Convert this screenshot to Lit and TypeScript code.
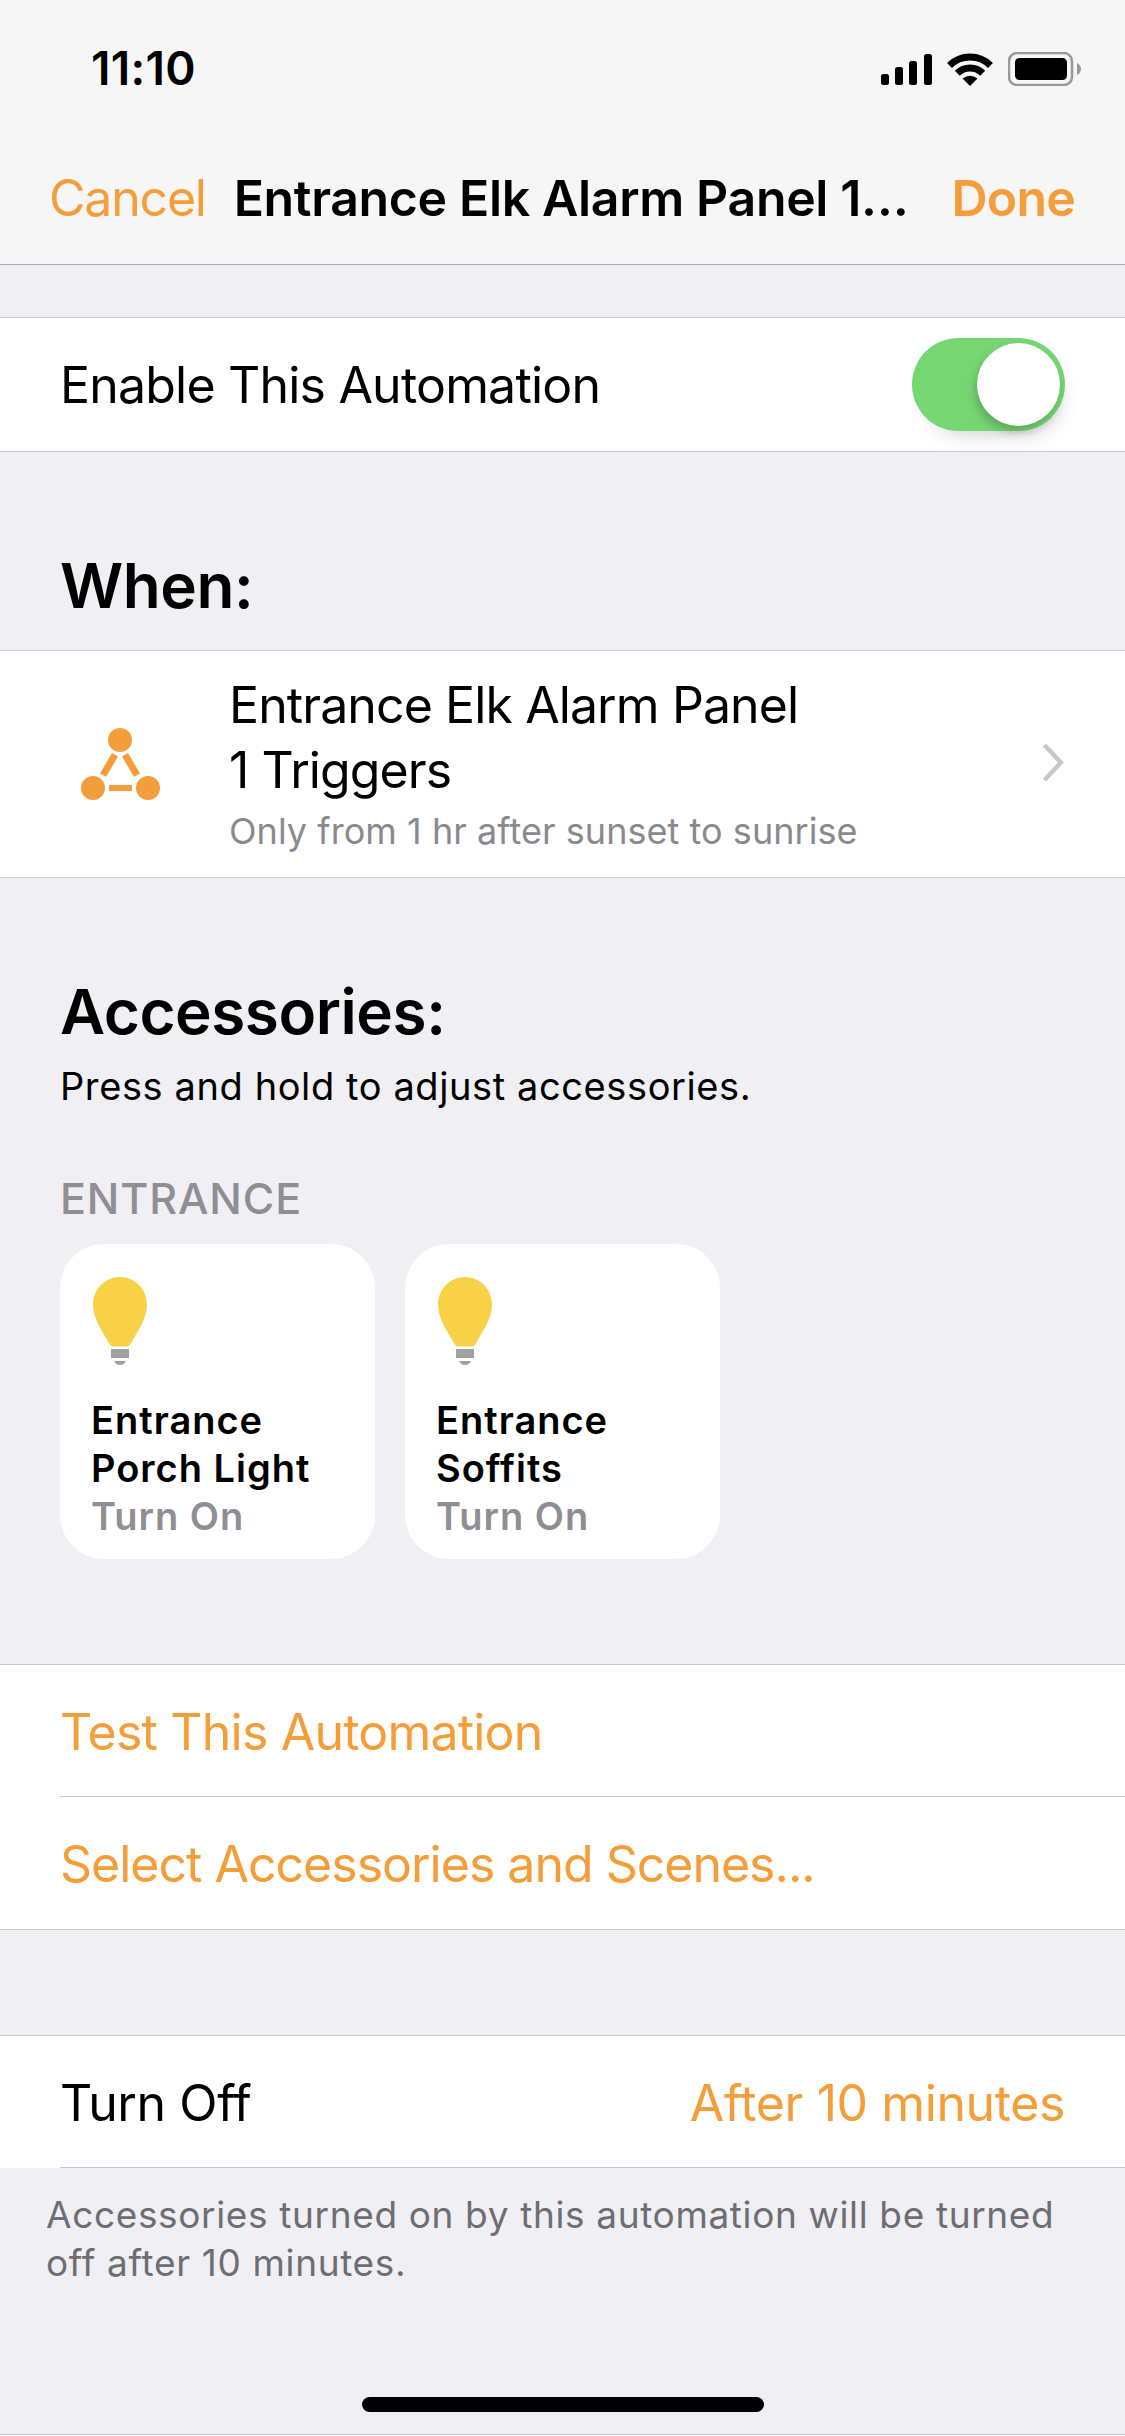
import { LitElement, html, css } from "lit";
import { customElement } from "lit/decorators.js";

@customElement("app-root")
export class AppRoot extends LitElement {
  static styles = css`
    :host { display: block; width: 1125px; height: 2436px; overflow: hidden; background: #efeff4; font-family: Inter, "Liberation Sans", sans-serif; color: #000; }
    * { box-sizing: border-box; }
    .page { position: relative; height: 2436px; display: flex; flex-direction: column; }
    .nav { height: 265px; background: #f6f6f6; border-bottom: 1px solid #a9a9ac; }
    .status { height: 132px; padding: 4px 44px 0 91px; display: flex; align-items: center; justify-content: space-between; }
    .time { font-size: 46px; font-weight: 600; letter-spacing: .3px; line-height: 50px; }
    .sicons { display: flex; align-items: center; gap: 15px; margin-top: 2px; }
    .sicons svg { display: block; }
    .bar { height: 132px; padding: 0 50px 0 49px; display: flex; align-items: center; justify-content: space-between; font-size: 50px; line-height: 60px; white-space: nowrap; }
    .cancel { color: #f59d38; letter-spacing: -1.2px; }
    .title { font-weight: 600; letter-spacing: -.35px; margin-right: 15px; }
    .done { color: #f59d38; font-weight: 600; letter-spacing: -.8px; }
    .group { background: #fff; border-top: 1px solid #c8c7cc; border-bottom: 1px solid #c8c7cc; }
    .row { display: flex; align-items: center; justify-content: space-between; padding: 0 60px; font-size: 50px; line-height: 60px; letter-spacing: -.8px; }
    .enable { margin-top: 52px; height: 135px; }
    .toggle { position: relative; width: 153px; height: 93px; border-radius: 47px; background: #76d672; overflow: visible; box-shadow: 6px 14px 22px -14px rgba(0,0,0,.25); }
    .knob { position: absolute; top: 5px; right: 5px; width: 83px; height: 83px; border-radius: 50%; background: #fff; box-shadow: -2px 6px 10px rgba(0,0,0,.2); }
    .h { padding: 0 60px; font-size: 62px; line-height: 70px; font-weight: 600; letter-spacing: -.45px; margin-top: 99px; }
    .trigger { margin-top: 29px; height: 228px; padding: 0 61px 0 81px; display: flex; align-items: center; }
    .trigger-icon { display: block; flex: none; margin-right: 68px; }
    .ttext { flex: 1; }
    .t1 { font-size: 50px; line-height: 65px; letter-spacing: -.9px; }
    .t2 { font-size: 36px; line-height: 50px; margin-top: 3px; margin-bottom: -1px; color: #8a8a8e; letter-spacing: .05px; }
    .chev { display: block; flex: none; margin-top: -3px; }
    .press { padding: 0 60px; margin-top: 14px; font-size: 38px; line-height: 50px; letter-spacing: .6px; }
    .room { padding: 0 60px; margin-top: 62px; font-size: 43px; line-height: 50px; font-weight: 500; color: #8e8e93; letter-spacing: .9px; }
    .cards { display: flex; gap: 30px; padding: 0 60px; margin-top: 21px; }
    .card { width: 315px; height: 315px; border-radius: 44px; background: #fff; padding: 33px 20px 0 31px; }
    .bulb { display: block; margin: 0 0 31px 2px; }
    .name, .state { font-size: 38px; line-height: 48px; font-weight: 600; letter-spacing: 1px; }
    .state { color: #8e8e93; }
    .actions { margin-top: 105px; }
    .inset { padding-left: 60px; }
    .line { height: 132px; display: flex; align-items: center; justify-content: space-between; padding: 2px 60px 0 0; font-size: 50px; line-height: 60px; letter-spacing: -.8px; }
    .line.sep { border-bottom: 1px solid #c8c7cc; }
    .tight { letter-spacing: -.4px; }
    .snug { letter-spacing: -1px; }
    .orange { color: #f59d38; }
    .off { margin-top: 105px; background: #fff; border-top: 1px solid #c8c7cc; }
    .foot { padding: 0 46px; margin-top: 23px; font-size: 37px; line-height: 48px; color: #6d6d72; letter-spacing: .64px; }
    .endline { margin-top: auto; margin-bottom: 1px; height: 1px; background: #c8c7cc; }
    .home { position: absolute; left: 362px; top: 2397px; width: 402px; height: 15px; border-radius: 8px; background: #000; }
  `;

  private card(a: string, b: string) {
    return html`<div class="card">
      <svg class="bulb" width="54" height="88" viewBox="0 0 54 88">
        <path fill="#f9d147" d="M27 0C42 0 54 12 54 28C54 41 45 54 38 66C37 68 36 69.500 34 69.500L20 69.500C18 69.500 17 68 16 66C9 54 0 41 0 28C0 12 12 0 27 0Z"/>
        <rect x="18" y="72" width="18" height="9" fill="#a0a0a0"/>
        <path fill="#a0a0a0" d="M21 84H33Q31 88 27 88Q23 88 21 84Z"/>
      </svg>
      <div class="name">${a}</div>
      <div class="name">${b}</div>
      <div class="state">Turn On</div>
    </div>`;
  }

  render() {
    return html`<div class="page">
      <div class="nav">
        <div class="status">
          <div class="time">11:10</div>
          <div class="sicons">
            <svg width="51" height="31" viewBox="0 0 51 31">
              <rect x="0" y="20" width="8" height="11" rx="2.500"/>
              <rect x="14" y="13" width="8" height="18" rx="2.500"/>
              <rect x="28" y="7" width="8" height="24" rx="2.500"/>
              <rect x="43" y="0" width="8" height="31" rx="2.500"/>
            </svg>
            <svg width="46" height="33" viewBox="0 0 46 33">
              <path d="M2.500 12.500A29 29 0 0 1 43.500 12.500" fill="none" stroke="#000" stroke-width="7"/>
              <path d="M10.300 20.300A18 18 0 0 1 35.700 20.300" fill="none" stroke="#000" stroke-width="7"/>
              <path d="M23 33L15.500 25.500Q23 20 30.500 25.500Z"/>
            </svg>
            <svg width="73" height="34" viewBox="0 0 73 34">
              <rect x="1" y="1" width="63" height="32" rx="8" fill="none" stroke="#999" stroke-width="2.500"/>
              <rect x="7" y="6" width="52" height="22" rx="4.500"/>
              <path d="M69 11C71 12 73 14 73 17C73 20 71 22 69 23Z" fill="#999"/>
            </svg>
          </div>
        </div>
        <div class="bar">
          <span class="cancel">Cancel</span>
          <span class="title">Entrance Elk Alarm Panel 1…</span>
          <span class="done">Done</span>
        </div>
      </div>

      <div class="group row enable">
        <span>Enable This Automation</span>
        <div class="toggle"><div class="knob"></div></div>
      </div>

      <div class="h">When:</div>
      <div class="group trigger">
        <svg class="trigger-icon" width="80" height="72" viewBox="0 0 80 72" fill="#f39e3a">
          <circle cx="39" cy="12" r="12"/>
          <circle cx="12" cy="60" r="12"/>
          <circle cx="67" cy="60" r="12"/>
          <path d="M31 25L37 28.500L25 49L19 45.500Z"/>
          <path d="M47 25L41 28.500L53 49L59 45.500Z"/>
          <rect x="28" y="57" width="23" height="6"/>
        </svg>
        <div class="ttext">
          <div class="t1">Entrance Elk Alarm Panel</div>
          <div class="t1">1 Triggers</div>
          <div class="t2">Only from 1 hr after sunset to sunrise</div>
        </div>
        <svg class="chev" width="22" height="39" viewBox="0 0 22 39">
          <polyline points="2.500,2 19,19.500 2.500,37" fill="none" stroke="#c7c7cc" stroke-width="4.500"/>
        </svg>
      </div>

      <div class="h">Accessories:</div>
      <div class="press">Press and hold to adjust accessories.</div>
      <div class="room">ENTRANCE</div>
      <div class="cards">
        ${this.card("Entrance", "Porch Light")}
        ${this.card("Entrance", "Soffits")}
      </div>

      <div class="group actions inset">
        <div class="line sep orange">Test This Automation</div>
        <div class="line snug orange">Select Accessories and Scenes...</div>
      </div>

      <div class="off inset">
        <div class="line sep tight"><span>Turn Off</span><span class="orange">After 10 minutes</span></div>
      </div>
      <div class="foot">Accessories turned on by this automation will be turned off after 10 minutes.</div>

      <div class="endline"></div>
      <div class="home"></div>
    </div>`;
  }
}
